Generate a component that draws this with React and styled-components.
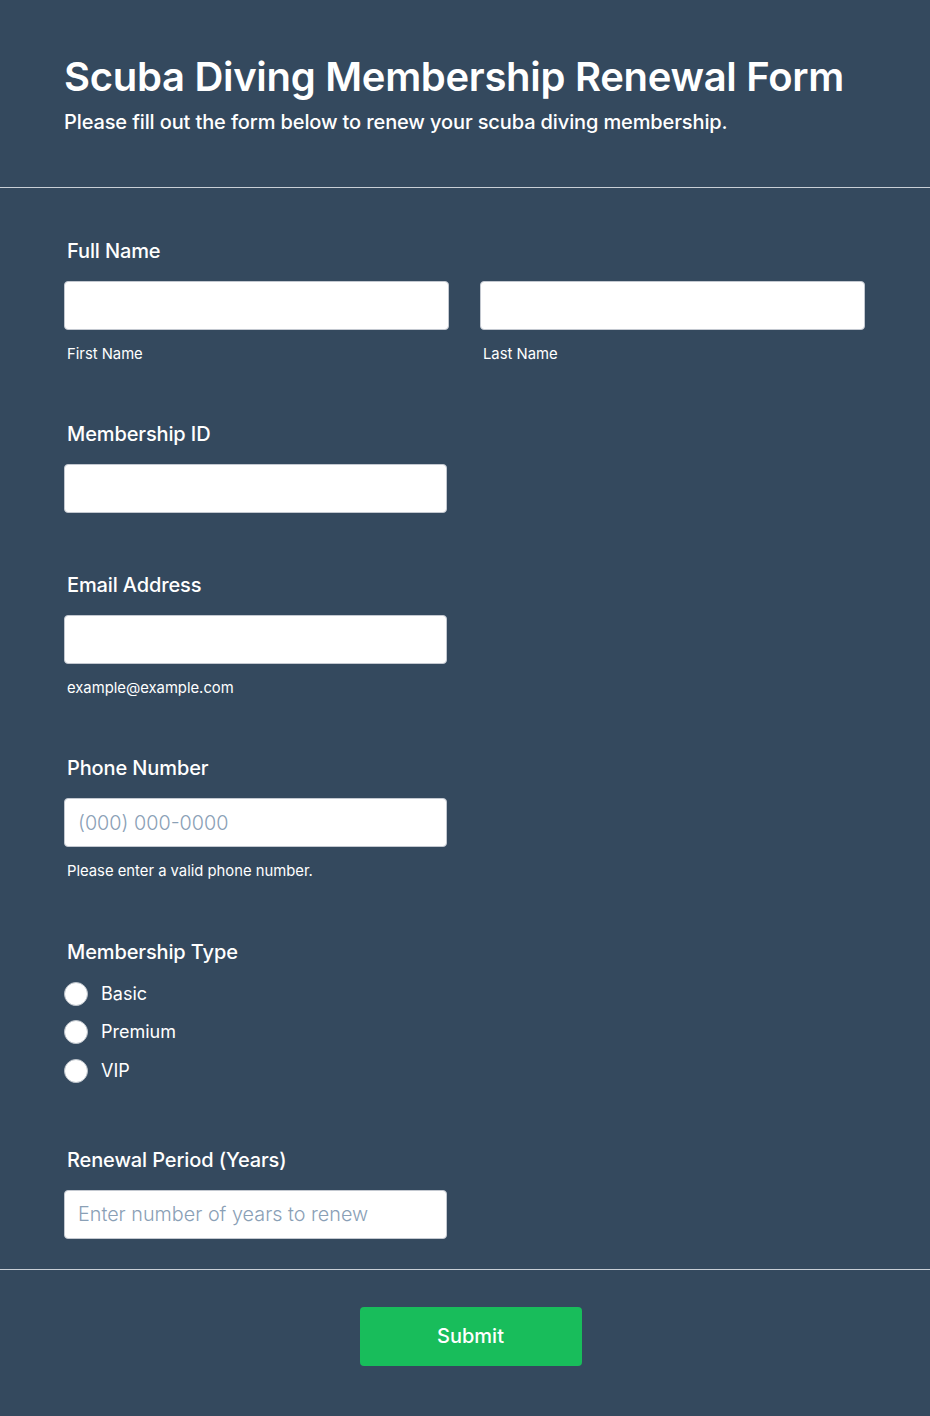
import React from "react";
import styled, { createGlobalStyle } from "styled-components";

const Global = createGlobalStyle`
  html, body { margin: 0; padding: 0; background: #34495e; }
  body { font-family: Inter, "Noto Sans", sans-serif; color: #fff; }
  * { box-sizing: border-box; }
`;

const Page = styled.div`
  width: 930px;
  min-height: 1416px;
  background: #34495e;
`;

const Header = styled.header`
  padding: 52px 64px 0;
  height: 188px;
  border-bottom: 1px solid #c9cfd6;
`;

const Title = styled.h1`
  margin: 0;
  font-size: 40px;
  line-height: 50px;
  font-weight: 600;
  letter-spacing: -0.3px;
`;

const Subtitle = styled.p`
  margin: 6px 0 0;
  font-size: 20px;
  line-height: 28px;
  font-weight: 500;
  letter-spacing: -0.12px;
`;

const Body = styled.div`
  padding: 51px 65px 30px 64px;
  border-bottom: 1px solid #c9cfd6;
  display: flex;
  flex-direction: column;
  gap: 59.4px;
`;

const Field = styled.div`
  display: flex;
  flex-direction: column;
  padding-bottom: ${(p) => p.$extra || 0}px;
`;

const Label = styled.label`
  font-size: 20px;
  line-height: 24px;
  font-weight: 500;
  letter-spacing: -0.12px;
  padding-left: 3px;
  margin-bottom: 18px;
`;

const Row = styled.div`
  display: grid;
  grid-template-columns: 385px 385px;
  column-gap: 31px;
`;

const Col = styled.div`
  display: flex;
  flex-direction: column;
`;

const Input = styled.input`
  width: ${(p) => p.$w || 383}px;
  height: 49px;
  border: 1px solid #c3c8d0;
  border-radius: 4px;
  background: #fff;
  padding: 0 13px;
  font-family: Inter, sans-serif;
  font-size: 19.8px;
  font-weight: 300;
  color: #2c3e50;
  outline: none;
  &::placeholder { color: #8aa0b6; }
`;

const Sub = styled.span`
  font-size: 14.8px;
  line-height: 18px;
  padding-left: 3px;
  margin-top: 15px;
`;

const Radios = styled.div`
  display: flex;
  flex-direction: column;
  gap: 14.5px;
`;

const RadioRow = styled.label`
  display: flex;
  align-items: center;
  gap: 13px;
  font-size: 18px;
  line-height: 24px;
`;

const Circle = styled.span`
  width: 24px;
  height: 24px;
  border-radius: 50%;
  background: #fff;
  border: 1px solid #b9c0c8;
`;

const Footer = styled.div`
  display: flex;
  justify-content: center;
  padding: 37px 0 50px;
`;

const Button = styled.button`
  width: 222px;
  height: 59px;
  margin-left: 11px;
  background: #18bd5b;
  border: none;
  border-radius: 4px;
  color: #fff;
  font-family: Inter, sans-serif;
  font-size: 20px;
  font-weight: 500;
`;

export default function App() {
  return (
    <Page>
      <Global />
      <Header>
        <Title>Scuba Diving Membership Renewal Form</Title>
        <Subtitle>Please fill out the form below to renew your scuba diving membership.</Subtitle>
      </Header>
      <Body>
        <Field>
          <Label>Full Name</Label>
          <Row>
            <Col>
              <Input $w={385} />
              <Sub>First Name</Sub>
            </Col>
            <Col>
              <Input $w={385} />
              <Sub>Last Name</Sub>
            </Col>
          </Row>
        </Field>
        <Field>
          <Label>Membership ID</Label>
          <Input />
        </Field>
        <Field>
          <Label>Email Address</Label>
          <Input />
          <Sub>example@example.com</Sub>
        </Field>
        <Field>
          <Label>Phone Number</Label>
          <Input placeholder="(000) 000-0000" />
          <Sub>Please enter a valid phone number.</Sub>
        </Field>
        <Field $extra={6}>
          <Label>Membership Type</Label>
          <Radios>
            {["Basic", "Premium", "VIP"].map((t) => (
              <RadioRow key={t}>
                <Circle />
                {t}
              </RadioRow>
            ))}
          </Radios>
        </Field>
        <Field>
          <Label>Renewal Period (Years)</Label>
          <Input placeholder="Enter number of years to renew" />
        </Field>
      </Body>
      <Footer>
        <Button>Submit</Button>
      </Footer>
    </Page>
  );
}
